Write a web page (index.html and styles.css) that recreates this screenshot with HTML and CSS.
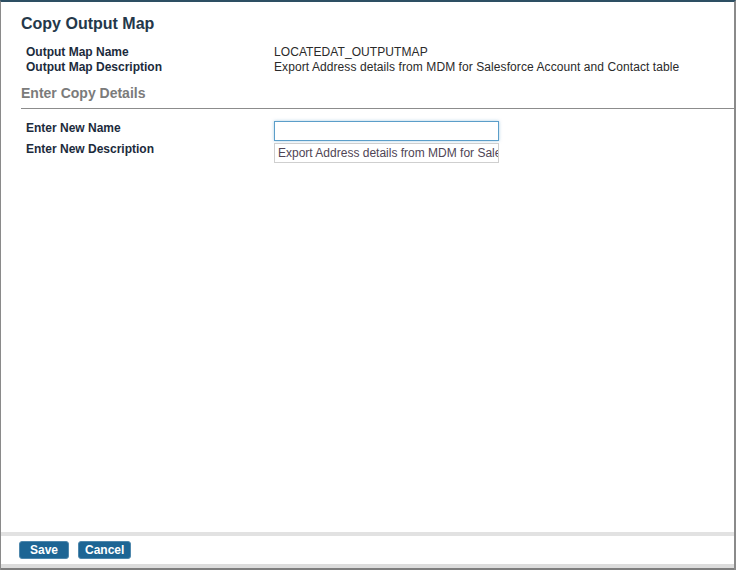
FILE: index.html
```html
<!DOCTYPE html>
<html lang="en">
<head>
    <meta charset="UTF-8">
    <meta name="viewport" content="width=device-width, initial-scale=1.0">
    <title>Copy Output Map</title>
    <link rel="stylesheet" href="styles.css">
</head>
<body>
    <div class="dialog">
        <div class="dialog-body">
            <div class="title">Copy Output Map</div>
            <div class="info">
                <div class="info-row">
                    <div class="label">Output Map Name</div>
                    <div class="value">LOCATEDAT_OUTPUTMAP</div>
                </div>
                <div class="info-row">
                    <div class="label">Output Map Description</div>
                    <div class="value">Export Address details from MDM for Salesforce Account and Contact table</div>
                </div>
            </div>
            <div class="section-title">Enter Copy Details</div>
            <div class="form">
                <div class="form-labels">
                    <div class="label">Enter New Name</div>
                    <div class="label">Enter New Description</div>
                </div>
                <div class="form-fields">
                    <input type="text" class="input-field" id="newName" autofocus>
                    <textarea class="text-field" rows="1">Export Address details from MDM for Salesforce Account and Contact table</textarea>
                </div>
            </div>
        </div>
        <div class="dialog-footer">
            <button class="btn btn-save">Save</button>
            <button class="btn">Cancel</button>
        </div>
        <div class="dialog-bottom"></div>
    </div>
</body>
</html>
```

FILE: styles.css
```css
body {
    font-family: "Liberation Sans", Arial, sans-serif;
    background-color: #fff;
    margin: 0;
}

.dialog {
    height: 570px;
    box-sizing: border-box;
    border-top: 2px solid #2d4f63;
    border-left: 1px solid #8a8a8a;
    border-right: 2px solid #8a8a8a;
    display: flex;
    flex-direction: column;
}

.dialog-body {
    flex: 1;
    padding: 13px 0 0 20px;
}

.title {
    font-size: 16px;
    font-weight: bold;
    color: #24384a;
    line-height: 18px;
}

.info {
    margin-top: 12px;
    padding-left: 5px;
}

.info-row {
    display: flex;
    font-size: 12px;
    line-height: 15px;
}

.label {
    width: 248px;
    font-weight: bold;
    color: #1c2b3c;
    font-size: 12px;
}

.value {
    color: #2a2a2a;
    letter-spacing: 0.08px;
}

.section-title {
    margin-top: 10px;
    font-size: 14px;
    font-weight: bold;
    color: #7b7b7b;
    line-height: 16px;
    padding-bottom: 7px;
    border-bottom: 1px solid #8c8c8c;
}

.form {
    display: flex;
    padding: 12px 0 0 5px;
}

.form-labels .label {
    line-height: 15px;
    margin-bottom: 6px;
}

.form-fields {
    display: flex;
    flex-direction: column;
    gap: 2px;
}

input.input-field {
    width: 225px;
    height: 20px;
    box-sizing: border-box;
    margin: 0;
    padding: 2px 4px;
    border: 1px solid #5b9ec9;
    box-shadow: 0 0 3px rgba(91, 158, 201, 0.5);
    outline: none;
    font-family: inherit;
    font-size: 12px;
}

.text-field {
    width: 225px;
    height: 20px;
    box-sizing: border-box;
    margin: 0;
    padding: 2px 3px;
    border: 1px solid #cfcfcf;
    resize: none;
    overflow: hidden;
    white-space: nowrap;
    font-family: inherit;
    font-size: 12px;
    line-height: 14px;
    color: #4f4555;
}

.dialog-footer {
    border-top: 4px solid #e2e2e2;
    padding: 5px 18px;
    display: flex;
    gap: 9px;
    height: 18px;
}

.dialog-bottom {
    height: 4px;
    background-color: #dcdcdc;
    border-bottom: 2px solid #7e7e7e;
}

.btn {
    padding: 0 6px;
    height: 18px;
    background-color: #1d6594;
    color: #fff;
    font-family: inherit;
    font-size: 12px;
    font-weight: bold;
    border: 1px solid #4f88ad;
    border-radius: 3px;
    cursor: pointer;
}

.btn-save {
    min-width: 50px;
}
```
